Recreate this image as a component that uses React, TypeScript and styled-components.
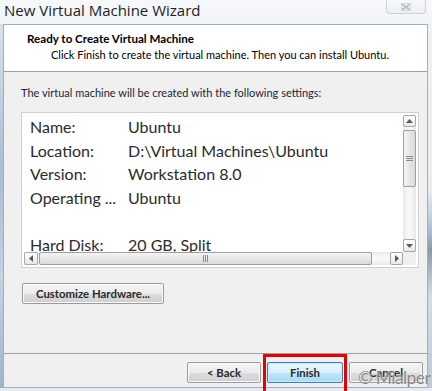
import React from 'react';
import styled, { createGlobalStyle } from 'styled-components';

const Global = createGlobalStyle`
  html, body { margin: 0; padding: 0; }
  body {
    width: 432px; height: 391px; overflow: hidden;
    background: #dfe6ee;
    font-family: Lato, "Open Sans", sans-serif;
  }
`;

const Screen = styled.div`
  position: relative;
  width: 432px;
  height: 391px;
  overflow: hidden;
  display: flex;
  flex-direction: column;
  background: linear-gradient(#f6f8fb, #eef2f6 40px, #e6ebf1);
`;

const TitleBar = styled.div`
  flex: 0 0 24px;
  display: flex;
  align-items: flex-start;
  justify-content: space-between;
`;

const Title = styled.div`
  font-family: "Open Sans", sans-serif;
  font-size: 15px;
  line-height: 20px;
  color: #1e1e1e;
  padding: 0 0 0 4px;
`;

const CloseBtn = styled.div`
  width: 38px;
  height: 13px;
  margin-right: 6px;
  border: 1px solid #c9d0d9;
  border-top: none;
  border-radius: 0 0 4px 4px;
  background: linear-gradient(#f7f8fa, #eceff3);
  display: flex;
  align-items: center;
  justify-content: center;
`;

const FrameRow = styled.div`
  flex: 1;
  display: flex;
`;

const LeftEdge = styled.div`
  width: 3px;
  background: linear-gradient(#d9e2ec, #a9bcd4 40%, #c4d2e2 70%, #9fb3cc);
`;

const RightEdge = styled.div`
  flex: 1;
  background: linear-gradient(#eef1f5, #e9edf2 45%, #b9c9dc 55%, #8a98a8 62%, #d5dde6 75%, #bcc8d6);
`;

const Window = styled.div`
  width: 423px;
  height: 362px;
  border: 1px solid #a7adb4;
  display: flex;
  flex-direction: column;
  background: #f0f0f0;
`;

const Header = styled.div`
  height: 40px;
  padding: 6px 0 0 23px;
  background: #ffffff;
  border-bottom: 1px solid #a0a0a0;
`;

const HeaderTitle = styled.div`
  font-size: 11.6px;
  line-height: 16px;
  font-weight: 700;
  color: #000;
`;

const HeaderSub = styled.div`
  font-size: 11px;
  line-height: 16px;
  color: #000;
  padding-left: 24px;
  white-space: nowrap;
`;

const Main = styled.div`
  flex: 1;
  padding: 13px 0 0 17px;
  display: flex;
  flex-direction: column;
  align-items: flex-start;
`;

const Intro = styled.div`
  font-size: 11px;
  line-height: 16px;
  color: #1c2533;
  white-space: nowrap;
`;

const ListBox = styled.div`
  margin-top: 11px;
  width: 392px;
  height: 150px;
  padding: 2px;
  border: 1px solid #cfcfcf;
  background: #ffffff;
  display: grid;
  grid-template-columns: 1fr 13px;
  grid-template-rows: 1fr 13px;
`;

const Content = styled.div`
  overflow: hidden;
  padding-left: 6px;
`;

const Row = styled.div`
  display: flex;
  font-size: 16px;
  line-height: 23.6px;
  color: #2b2b2b;
  white-space: nowrap;
`;

const Label = styled.span`
  width: 98px;
  flex: 0 0 98px;
`;

const VScroll = styled.div`
  display: flex;
  flex-direction: column;
  background: linear-gradient(90deg, #e8e8e8, #f8f8f8 40%, #f8f8f8 60%, #e8e8e8);
`;

const HScroll = styled.div`
  display: flex;
  background: linear-gradient(#e8e8e8, #f8f8f8 40%, #f8f8f8 60%, #e8e8e8);
`;

const Corner = styled.div`
  background: #f0f0f0;
`;

const ArrowBtn = styled.div<{ $w: number; $h: number }>`
  flex: 0 0 auto;
  width: ${(p) => p.$w}px;
  height: ${(p) => p.$h}px;
  box-sizing: border-box;
  border: 1px solid #a7a7a7;
  border-radius: 2px;
  background: linear-gradient(#ffffff, #e9e9e9);
  display: flex;
  align-items: center;
  justify-content: center;
`;

const Thumb = styled.div<{ $vertical?: boolean }>`
  box-sizing: border-box;
  border: 1px solid #9f9f9f;
  border-radius: 2px;
  background: ${(p) =>
    p.$vertical
      ? 'linear-gradient(90deg, #f4f4f4, #e6e6e6 50%, #dadada)'
      : 'linear-gradient(#f4f4f4, #e6e6e6 50%, #dadada)'};
  display: flex;
  align-items: center;
  justify-content: center;
`;

const Spacer = styled.div`
  flex: 1;
`;

const Button = styled.button<{ $default?: boolean; $w: number }>`
  width: ${(p) => p.$w}px;
  height: 21px;
  padding: 0;
  box-sizing: border-box;
  border: 1px solid ${(p) => (p.$default ? '#3c7fb1' : '#9a9a9a')};
  border-radius: 2px;
  box-shadow: inset 0 0 0 1px ${(p) => (p.$default ? '#c8ecfc' : '#fbfbfb')};
  background: ${(p) =>
    p.$default
      ? 'linear-gradient(#eaf6fd, #d9f0fc 50%, #bee6fd 51%, #a7d9f5)'
      : 'linear-gradient(#f4f4f4, #ebebeb 50%, #dddddd 51%, #cfcfcf)'};
  font-family: Lato, "Open Sans", sans-serif;
  font-size: 11.4px;
  font-weight: 700;
  color: #2a2a2a;
  cursor: default;
`;

const CustomizeWrap = styled.div`
  margin-top: 14px;
  margin-left: 1px;
`;

const Footer = styled.div`
  height: 25px;
  padding-top: 8px;
  border-top: 1px solid #a0a0a0;
  display: flex;
  justify-content: flex-end;
  gap: 6px;
  padding-right: 4px;
`;

const BottomEdge = styled.div`
  flex: 1;
`;

const Highlight = styled.div`
  position: absolute;
  left: 263px;
  top: 354px;
  width: 84px;
  height: 40px;
  box-sizing: border-box;
  border: 3px solid #e60000;
  pointer-events: none;
`;

const Watermark = styled.div`
  position: absolute;
  left: 358px;
  top: 367px;
  font-family: Lato, "Liberation Sans", sans-serif;
  font-weight: 400;
  font-size: 17.5px;
  line-height: 22px;
  letter-spacing: -0.6px;
  color: rgba(115, 115, 115, 0.85);
  text-shadow: 0 0 1px rgba(255, 255, 255, 0.9);
  white-space: nowrap;
  pointer-events: none;
`;

const Up = () => (
  <svg width="7" height="4" viewBox="0 0 7 4"><path d="M3.5 0 L7 4 L0 4 Z" fill="#4b5b75" /></svg>
);
const Down = () => (
  <svg width="7" height="4" viewBox="0 0 7 4"><path d="M0 0 L7 0 L3.5 4 Z" fill="#4b5b75" /></svg>
);
const Left = () => (
  <svg width="4" height="7" viewBox="0 0 4 7"><path d="M4 0 L4 7 L0 3.5 Z" fill="#4b5b75" /></svg>
);
const Right = () => (
  <svg width="4" height="7" viewBox="0 0 4 7"><path d="M0 0 L4 3.5 L0 7 Z" fill="#4b5b75" /></svg>
);
const GripH = () => (
  <svg width="7" height="5" viewBox="0 0 7 5">
    <path d="M0 0.5H7M0 2.5H7M0 4.5H7" stroke="#8a8a8a" strokeWidth="1" />
  </svg>
);
const GripV = () => (
  <svg width="5" height="7" viewBox="0 0 5 7">
    <path d="M0.5 0V7M2.5 0V7M4.5 0V7" stroke="#8a8a8a" strokeWidth="1" />
  </svg>
);

const rows: [string, string][] = [
  ['Name:', 'Ubuntu'],
  ['Location:', 'D:\\Virtual Machines\\Ubuntu'],
  ['Version:', 'Workstation 8.0'],
  ['Operating ...', 'Ubuntu'],
  ['', ''],
  ['Hard Disk:', '20 GB, Split'],
];

export default function App() {
  return (
    <>
      <Global />
      <Screen>
        <TitleBar>
          <Title>New Virtual Machine Wizard</Title>
          <CloseBtn>
            <svg width="10" height="8" viewBox="0 0 10 8">
              <path d="M1 1 L9 7 M9 1 L1 7" stroke="#b9bec5" strokeWidth="1.6" />
              <rect x="0.5" y="0.5" width="9" height="7" fill="none" stroke="#d3d7dc" strokeWidth="1" />
            </svg>
          </CloseBtn>
        </TitleBar>
        <FrameRow>
          <LeftEdge />
          <Window>
            <Header>
              <HeaderTitle>Ready to Create Virtual Machine</HeaderTitle>
              <HeaderSub>Click Finish to create the virtual machine. Then you can install Ubuntu.</HeaderSub>
            </Header>
            <Main>
              <Intro>The virtual machine will be created with the following settings:</Intro>
              <ListBox>
                <Content>
                  {rows.map(([l, v], i) => (
                    <Row key={i}>
                      <Label>{l || '\u00a0'}</Label>
                      <span>{v}</span>
                    </Row>
                  ))}
                </Content>
                <VScroll>
                  <ArrowBtn $w={13} $h={12}><Up /></ArrowBtn>
                  <div style={{ height: 3 }} />
                  <Thumb $vertical style={{ height: 57 }}><GripH /></Thumb>
                  <Spacer />
                  <ArrowBtn $w={13} $h={13}><Down /></ArrowBtn>
                </VScroll>
                <HScroll>
                  <ArrowBtn $w={14} $h={13}><Left /></ArrowBtn>
                  <div style={{ width: 1 }} />
                  <Thumb style={{ width: 333 }}><GripV /></Thumb>
                  <Spacer />
                  <ArrowBtn $w={13} $h={13}><Right /></ArrowBtn>
                </HScroll>
                <Corner />
              </ListBox>
              <CustomizeWrap>
                <Button $w={142}>Customize Hardware...</Button>
              </CustomizeWrap>
            </Main>
            <Footer>
              <Button $w={74}>&lt; Back</Button>
              <Button $w={76} $default>Finish</Button>
              <Button $w={74}>Cancel</Button>
            </Footer>
          </Window>
          <RightEdge />
        </FrameRow>
        <BottomEdge />
        <Highlight />
        <Watermark>© Mialper</Watermark>
      </Screen>
    </>
  );
}
